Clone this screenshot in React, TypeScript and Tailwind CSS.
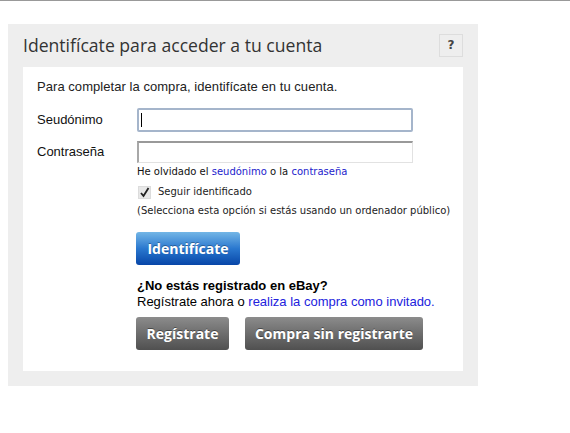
import React from "react";

export default function App() {
  const arial = { fontFamily: '"Liberation Sans", Arial, sans-serif' };
  const dv = { fontFamily: '"DejaVu Sans", Verdana, sans-serif' };
  const title = { fontFamily: '"Open Sans", "Noto Sans", sans-serif' };
  return (
    <div className="w-[570px] h-[433px] bg-white relative">
      <div className="h-px bg-[#999999] w-full" />
      <div className="ml-[8px] mt-[23px] w-[470px] bg-[#eeeeee] px-[15px] pb-[15px]">
        <div className="h-[43px] flex items-center justify-between">
          <h1 className="text-[17.6px] text-[#333333] leading-none mt-[1px]" style={title}>
            Identifícate para acceder a tu cuenta
          </h1>
          <div
            className="w-[24px] h-[23px] border border-[#dddddd] bg-[#eeeeee] flex items-center justify-center text-[12px] font-bold text-[#444444] -mt-[1px]"
            style={dv}
          >
            ?
          </div>
        </div>
        <div className="bg-white pl-[14px] pt-[12px] pb-[21px]">
          <p className="text-[13px] text-[#222222] leading-[16px] tracking-[0.05px]" style={arial}>
            Para completar la compra, identifícate en tu cuenta.
          </p>
          <div className="flex items-center mt-[13px]">
            <label className="w-[100px] text-[13px] text-[#111111]" style={arial}>
              Seudónimo
            </label>
            <div className="w-[276px] h-[24px] rounded-[2px] border-2 border-[#a5b5cb] bg-white flex items-center pl-[2px]">
              <div className="w-px h-[14px] bg-black" />
            </div>
          </div>
          <div className="flex items-center mt-[9px]">
            <label className="w-[100px] text-[13px] text-[#111111]" style={arial}>
              Contraseña
            </label>
            <div className="w-[276px] h-[22px] border border-[#e2e2e2] border-t-2 border-t-[#999999] border-l-2 border-l-[#a8a8a8] bg-white" />
          </div>
          <div className="ml-[100px]">
            <p className="text-[10px] text-[#111111] mt-[2px] leading-[14px]" style={dv}>
              He olvidado el <span className="text-[#2222cc]">seudónimo</span> o la{" "}
              <span className="text-[#2222cc]">contraseña</span>
            </p>
            <div className="flex items-center mt-[6px]">
              <svg width="13" height="13" viewBox="0 0 13 13" className="ml-[1px]">
                <rect x="0.5" y="0.5" width="12" height="12" fill="#e8e8e8" stroke="#dcdcdc" />
                <path d="M3 7 L5.5 10 L10.5 2" stroke="#222" strokeWidth="1.8" fill="none" />
              </svg>
              <span className="ml-[7px] text-[10px] text-[#222222] leading-[14px]" style={dv}>
                Seguir identificado
              </span>
            </div>
            <p className="text-[10px] text-[#222222] mt-[5px] leading-[14px]" style={dv}>
              (Selecciona esta opción si estás usando un ordenador público)
            </p>
            <button
              className="mt-[14px] -ml-px w-[104px] h-[33px] rounded-[3px] bg-gradient-to-b from-[#73b6e6] via-[#2a78cf] to-[#0846a8] text-white text-[14px] font-bold"
              style={{ ...title, textShadow: "0 -1px 0 rgba(0,0,0,0.3)" }}
            >
              Identifícate
            </button>
            <p className="mt-[13px] text-[13px] font-bold text-black leading-[16px]" style={arial}>
              ¿No estás registrado en eBay?
            </p>
            <p className="text-[13px] text-black leading-[16px]" style={arial}>
              Regístrate ahora o <span className="text-[#2222dd]">realiza la compra como invitado.</span>
            </p>
            <div className="flex gap-[16px] mt-[7px] -ml-px">
              <button
                className="w-[93px] h-[33px] rounded-[3px] bg-gradient-to-b from-[#8c8c8c] to-[#505050] text-white text-[14px] font-bold"
                style={{ ...title, textShadow: "0 -1px 0 rgba(0,0,0,0.4)" }}
              >
                Regístrate
              </button>
              <button
                className="w-[178px] h-[33px] rounded-[3px] bg-gradient-to-b from-[#8c8c8c] to-[#505050] text-white text-[14px] font-bold"
                style={{ ...title, textShadow: "0 -1px 0 rgba(0,0,0,0.4)" }}
              >
                Compra sin registrarte
              </button>
            </div>
          </div>
        </div>
      </div>
    </div>
  );
}
